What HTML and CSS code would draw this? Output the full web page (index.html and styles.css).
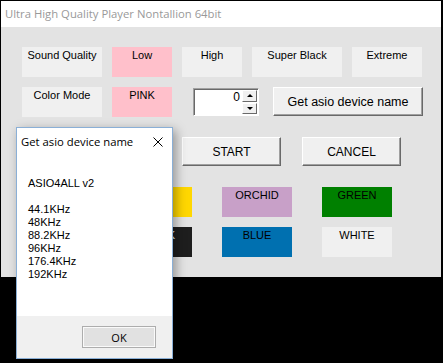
FILE: index.html
```html
<!DOCTYPE html>
<html lang="en">
<head>
  <meta charset="UTF-8" />
  <title>Ultra High Quality Player Nontallion 64bit</title>
  <link rel="stylesheet" href="styles.css">
</head>
<body>

  <div class="app">
    <div class="app-title">Ultra High Quality Player Nontallion 64bit</div>
    <div class="app-body">
      <div class="row">
        <div class="lbl w80">Sound Quality</div>
        <div class="lbl w60 pink">Low</div>
        <div class="lbl w60">High</div>
        <div class="lbl w90">Super Black</div>
        <div class="lbl w70">Extreme</div>
      </div>

      <div class="row">
        <div class="lbl w80">Color Mode</div>
        <div class="lbl w60 pink">PINK</div>
        <div class="spinner">
          <div class="spin-value">0</div>
          <div class="spin-btns">
            <div class="spin-btn"><span class="tri up"></span></div>
            <div class="spin-btn"><span class="tri down"></span></div>
          </div>
        </div>
        <button class="btn asio">Get asio device name</button>
      </div>

      <div class="row actions">
        <button class="btn wide">START</button>
        <button class="btn wide">CANCEL</button>
      </div>

      <div class="colors">
        <div class="swatch yellow">GOLD</div>
        <div class="swatch orchid">ORCHID</div>
        <div class="swatch green">GREEN</div>
        <div class="swatch black">BLACK</div>
        <div class="swatch blue">BLUE</div>
        <div class="swatch white">WHITE</div>
      </div>
    </div>
  </div>

  <div class="dialog">
    <div class="dlg-title">
      <span>Get asio device name</span>
      <svg class="dlg-close" width="10" height="10" viewBox="0 0 10 10">
        <path d="M0.5 0.5 L9.5 9.5 M9.5 0.5 L0.5 9.5" stroke="#000" stroke-width="1" fill="none"/>
      </svg>
    </div>
    <div class="dlg-body">
      <div>ASIO4ALL v2</div>
      <div class="gap"></div>
      <div>44.1KHz</div>
      <div>48KHz</div>
      <div>88.2KHz</div>
      <div>96KHz</div>
      <div>176.4KHz</div>
      <div>192KHz</div>
    </div>
    <div class="dlg-foot">
      <button class="ok">OK</button>
    </div>
  </div>

</body>
</html>
```

FILE: styles.css
```css
body {
  margin: 0;
  width: 443px;
  height: 363px;
  background-color: #000;
  position: relative;
  overflow: hidden;
  font-family: 'Liberation Sans', Arial, sans-serif;
  font-size: 11px;
}

/* main window */
.app {
  position: absolute;
  left: 1px;
  top: 1px;
  width: 440px;
  height: 276px;
  background-color: #e3e3e3;
}
.app-title {
  height: 26px;
  line-height: 26px;
  background-color: #fff;
  color: #999;
  padding-left: 4px;
  font-family: 'Open Sans', 'Noto Sans', sans-serif;
  font-size: 11.3px;
}
.app-body {
  padding: 20px 0 0 21px;
}
.row {
  display: flex;
  gap: 10px;
  height: 30px;
  margin-bottom: 10px;
}
.lbl {
  height: 30px;
  background-color: #f0f0f0;
  text-align: center;
  line-height: 14px;
  padding-top: 1px;
  box-sizing: border-box;
}
.w80 { width: 80px; }
.w60 { width: 60px; }
.w70 { width: 70px; }
.w90 { width: 90px; }
.pink { background-color: #ffc0cb; }

/* up/down box */
.spinner {
  margin-left: 11px;
  margin-top: 1px;
  width: 66px;
  height: 28px;
  box-sizing: border-box;
  display: flex;
  background-color: #fff;
  border: 1px solid;
  border-color: #a0a0a0 #fff #fff #a0a0a0;
  box-shadow: inset 1px 1px #696969;
}
.spin-value {
  flex: 1;
  text-align: right;
  padding: 1px 2px 0 0;
  line-height: 14px;
  font-size: 12px;
}
.spin-btns {
  width: 15px;
  display: flex;
  flex-direction: column;
  padding: 1px 1px 1px 0;
  gap: 1px;
}
.spin-btn {
  flex: 1;
  background-color: #f0f0f0;
  border: 1px solid;
  border-color: #fff #696969 #696969 #fff;
  display: flex;
  align-items: center;
  justify-content: center;
}
.tri {
  width: 0;
  height: 0;
  border-left: 3px solid transparent;
  border-right: 3px solid transparent;
}
.tri.up { border-bottom: 3px solid #000; }
.tri.down { border-top: 3px solid #000; }

.btn {
  font-family: 'Liberation Sans', Arial, sans-serif;
  font-size: 12px;
  color: #000;
  height: 29px;
  padding: 0;
  background-color: #f0f0f0;
  border: 1px solid;
  border-color: #fff #696969 #696969 #fff;
  box-shadow: inset -1px -1px #a0a0a0;
}
.asio {
  width: 150px;
  margin-left: 4px;
  font-size: 12.5px;
}
.actions {
  padding-left: 160px;
  gap: 21px;
  margin-top: 20px;
}
.wide { width: 99px; }

/* colour swatches */
.colors {
  margin: 20px 0 0 100px;
  display: grid;
  grid-template-columns: repeat(3, 70px);
  grid-auto-rows: 30px;
  column-gap: 30px;
  row-gap: 10px;
}
.swatch {
  text-align: center;
  line-height: 14px;
  padding-top: 1px;
  box-sizing: border-box;
}
.yellow { background-color: #ffd700; }
.orchid { background-color: #c8a0c8; }
.green { background-color: #008000; }
.black { background-color: #1e1e1e; color: #fff; }
.blue { background-color: #0070b0; }
.white { background-color: #f0f0f0; }

/* dialog */
.dialog {
  position: absolute;
  left: 16px;
  top: 127px;
  width: 157px;
  height: 232px;
  box-sizing: border-box;
  border: 1px solid #8aafd6;
  background-color: #fff;
  display: flex;
  flex-direction: column;
  box-shadow: 3px 3px 10px rgba(0, 0, 0, 0.35);
  font-family: 'Open Sans', 'Noto Sans', sans-serif;
  font-size: 11.3px;
  color: #000;
}
.dlg-title {
  height: 27px;
  display: flex;
  align-items: center;
  justify-content: space-between;
  padding: 0 9px 0 4px;
}
.dlg-close {
  display: block;
}
.dlg-body {
  flex: 1;
  padding: 22px 0 0 11px;
  font-family: 'Liberation Sans', Arial, sans-serif;
  font-size: 11px;
  line-height: 13px;
}
.gap {
  height: 13px;
}
.dlg-foot {
  height: 42px;
  background-color: #f0f0f0;
  display: flex;
  justify-content: flex-end;
  align-items: flex-start;
  padding: 10px 16px 0 0;
  box-sizing: border-box;
}
.ok {
  width: 74px;
  height: 22px;
  padding: 0;
  font-family: 'Open Sans', 'Noto Sans', sans-serif;
  font-size: 11px;
  background-color: #e1e1e1;
  border: 1px solid #adadad;
  box-shadow: inset 0 0 0 1px #fafafa;
}
```
